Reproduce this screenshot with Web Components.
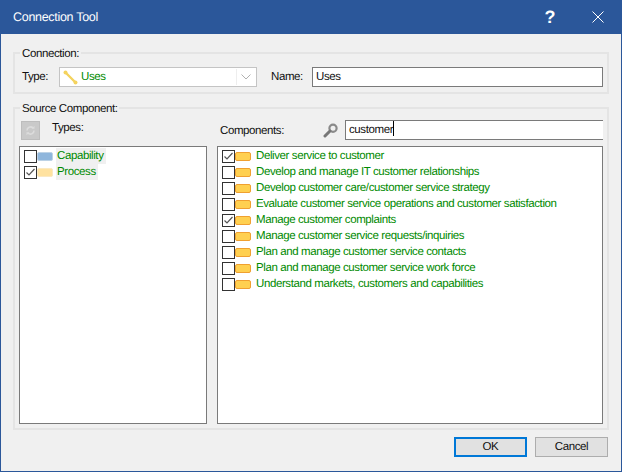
<!DOCTYPE html>
<html><head><meta charset="utf-8"><style>
html,body{margin:0;padding:0;background:#f0f0f0}
body{font:11.5px "Liberation Sans",Arial,sans-serif;color:#111}
</style></head><body>
<conn-dialog title-text="Connection Tool">
  <group-box label="Connection:" style="height:42px;margin-top:18px">
    <div style="display:grid;grid-template-columns:40px 198px 11px 44px 291px;align-items:center;height:20px;margin-top:13px">
      <field-label>Type:</field-label>
      <combo-box text="Uses"></combo-box>
      <span></span>
      <field-label>Name:</field-label>
      <text-box text="Uses"></text-box>
    </div>
  </group-box>
  <group-box label="Source Component:" style="height:323px;margin-top:13px">
    <source-panel></source-panel>
  </group-box>
  <div slot="footer" style="display:flex;justify-content:flex-end;gap:8px">
    <dlg-button primary>OK</dlg-button>
    <dlg-button>Cancel</dlg-button>
  </div>
</conn-dialog>
<script>
const FONT='"Liberation Sans",Arial,sans-serif';
function def(name,css,html,extra){
  customElements.define(name,class extends HTMLElement{
    constructor(){super();this.attachShadow({mode:'open'});}
    connectedCallback(){
      const h=typeof html==='function'?html(this):html;
      this.shadowRoot.innerHTML='<style>'+css+'</style>'+h;
    }
  });
}
def('conn-dialog',`
:host{display:flex;flex-direction:column;box-sizing:border-box;width:622px;height:472px;border:1px solid #2b579a;border-top:0;background:#f0f0f0;font-family:${FONT};font-size:11.5px;letter-spacing:-.4px;text-rendering:geometricPrecision;color:#111}
.t{display:flex;align-items:center;height:34px;margin:0 -1px;background:#2b579a;color:#fff;flex:none;padding-left:13px;font-size:12.5px;letter-spacing:-.3px}
.t span{flex:1}
.q{font:bold 18px "Liberation Sans",sans-serif;letter-spacing:0;width:20px;text-align:center;margin-right:32px}
svg{display:block;margin-right:18px}
.m{flex:none;padding:0 12px;display:flex;flex-direction:column}
.f{flex:none;padding:7px 13px 0 0}
`,el=>`<div class="t"><span>${el.getAttribute('title-text')}</span><div class="q">?</div><svg width="12" height="12" viewBox="0 0 12 12"><path d="M.5.5l11 11M11.5.5l-11 11" stroke="#fff" fill="none"/></svg></div>
<div class="m"><slot></slot></div><div class="f"><slot name="footer"></slot></div>`);
def('group-box',`
:host{display:block;position:relative;box-sizing:border-box;border:2px solid #e4e4e4;padding:0 4px 4px 4px}
.l{position:absolute;left:5px;top:-8px;padding:0 2px;background:#f0f0f0;line-height:16px;white-space:nowrap}
`,el=>`<div class="l">${el.getAttribute('label')}</div><slot></slot>`);
def('field-label',`:host{display:block;line-height:21px;height:20px;padding-left:3px;white-space:nowrap}`,`<slot></slot>`);
def('combo-box',`
:host{display:flex;align-items:center;box-sizing:border-box;height:20px;border:1px solid #c4c4c4;background:#fff;padding-left:2px;position:relative}
.b{margin:0 0 0 1px;flex:none}
.x{flex:1;padding-left:3px;color:#008a00}
.a{flex:none;width:18px;height:16px;margin-right:1px;border-left:1px solid #eee;display:flex;align-items:center;justify-content:center}
`,el=>`<svg class="b" width="15" height="15" viewBox="0 0 15 15"><path d="M3 3l9 9" stroke="#f4d35e" stroke-width="2.4" stroke-linecap="round"/><circle cx="2.5" cy="2.5" r="2" fill="#f4d35e"/><circle cx="12.5" cy="12.5" r="2" fill="#f4d35e"/></svg><div class="x">${el.getAttribute('text')}</div><div class="a"><svg width="10" height="6" viewBox="0 0 10 6"><path d="M.5.5L5 5 9.5.5" fill="none" stroke="#b0b0b0"/></svg></div>`);
def('text-box',`
:host{display:block;box-sizing:border-box;height:20px;border:1px solid #7a7a7a;background:#fff;padding-left:3px;line-height:19px}
:host([open-right]){border-right:0;border-color:#7a7a7a}
i{display:inline-block;width:1px;height:15px;background:#000;vertical-align:-3px}
`,el=>`${el.getAttribute('text')}${el.hasAttribute('caret')?'<i></i>':''}`);
def('check-box',`
:host{display:block;box-sizing:border-box;width:13px;height:13px;border:1px solid #333;background:#fff;flex:none}
svg{display:block}
`,el=>el.hasAttribute('checked')?`<svg width="11" height="11" viewBox="0 0 11 11"><path d="M1.5 5.5l2.5 2.5 5.5-6" fill="none" stroke="#555" stroke-width="1.2"/></svg>`:'');
def('tree-row',`
:host{display:flex;align-items:center;height:16px;white-space:nowrap}
.s{display:block;flex:none;box-sizing:border-box;width:16px;height:9px;border-radius:2px;margin-top:1px}
.x{display:block;color:#008a00;line-height:17px;height:16px;margin-left:5px}
:host([mark]) .x{background:#f0f0f0;margin-left:3px;padding:0 2px 0 1px}
`,el=>{
  const k=el.getAttribute('kind')||'folder';
  const c={folder:'background:#ffd050;border:1px solid #f0a030',cap:'background:#8fb6dc;border:1px solid #bcd2e6',proc:'background:#ffe2a0;border:1px solid #fbe9c2'}[k];
  return `<check-box ${el.hasAttribute('checked')?'checked':''}></check-box><span class="s" style="${c}"></span><span class="x"><slot></slot></span>`;
});
def('list-pane',`
:host{display:block;box-sizing:border-box;height:278px;border:1px solid #7a7a7a;background:#fff;padding:1px 0 0 4px;overflow:hidden}
`,`<slot></slot>`);
def('dlg-button',`
:host{display:block;box-sizing:border-box;width:73px;height:20px;background:#e1e1e1;border:1px solid #adadad;text-align:center;line-height:19px}
:host([primary]){border:2px solid #0078d7;line-height:17px}
`,`<slot></slot>`);
def('refresh-btn',`
:host{display:flex;align-items:center;justify-content:center;box-sizing:border-box;width:19px;height:19px;background:#c9c9c9;border:1px solid #bdbdbd;flex:none}
`,`<svg width="11" height="11" viewBox="0 0 11 11"><path d="M2 5.5a3.5 3.5 0 0 1 6-2.5M9 5.5a3.5 3.5 0 0 1-6 2.5" fill="none" stroke="#dcdcdc" stroke-width="1.6"/><path d="M9.5 .8v3H6.5zM1.5 10.2v-3h3z" fill="#dcdcdc"/></svg>`);
def('search-icon',`:host{display:block;width:16px;height:15px;flex:none}svg{display:block}`,
`<svg width="16" height="15" viewBox="0 0 16 15"><circle cx="10" cy="5.2" r="3.6" fill="none" stroke="#8a8a8a" stroke-width="2.2"/><path d="M7 8L2 13" stroke="#777" stroke-width="3" stroke-linecap="round"/></svg>`);
def('source-panel',`
:host{display:grid;grid-template-columns:188px 386px;column-gap:10px;grid-template-rows:20px 278px;row-gap:6px;margin-top:11px}
.h{display:flex;align-items:center}
.h1 refresh-btn{margin-left:2px}
.h1 span{margin-left:12px;margin-top:-4px}
.h2 span{margin-left:3px;margin-top:1px;width:103px}
.h2 text-box{flex:1;margin-left:6px}
`,()=>{
  const L=[['Deliver service to customer',1],['Develop and manage IT customer relationships'],['Develop customer care/customer service strategy'],['Evaluate customer service operations and customer satisfaction'],['Manage customer complaints',1],['Manage customer service requests/inquiries'],['Plan and manage customer service contacts'],['Plan and manage customer service work force'],['Understand markets, customers and capabilities']];
  return `<div class="h h1"><refresh-btn></refresh-btn><span>Types:</span></div>
  <div class="h h2"><span>Components:</span><search-icon></search-icon><text-box open-right caret text="customer"></text-box></div>
  <list-pane><tree-row kind="cap" mark>Capability</tree-row><tree-row kind="proc" mark checked>Process</tree-row></list-pane>
  <list-pane>${L.map(r=>`<tree-row ${r[1]?'checked':''}>${r[0]}</tree-row>`).join('')}</list-pane>`;
});
</script>
</body></html>
